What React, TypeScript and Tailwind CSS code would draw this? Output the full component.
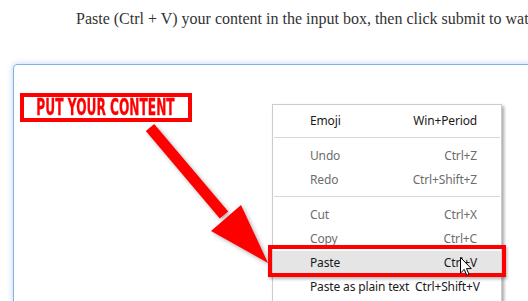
const menuFont = { fontFamily: '"Noto Sans", "Open Sans", sans-serif' };

type Item = { label: string; keys: string; disabled?: boolean; active?: boolean };

const groups: Item[][] = [
  [{ label: "Emoji", keys: "Win+Period" }],
  [
    { label: "Undo", keys: "Ctrl+Z", disabled: true },
    { label: "Redo", keys: "Ctrl+Shift+Z", disabled: true },
  ],
  [
    { label: "Cut", keys: "Ctrl+X", disabled: true },
    { label: "Copy", keys: "Ctrl+C", disabled: true },
    { label: "Paste", keys: "Ctrl+V", active: true },
    { label: "Paste as plain text", keys: "Ctrl+Shift+V" },
  ],
];

function MenuRow({ item }: { item: Item }) {
  return (
    <div
      className={`flex h-[24px] items-center justify-between gap-[6px] whitespace-nowrap pl-[37px] pr-[24px] text-[12px] leading-[16px] tracking-[-0.15px] ${
        item.active ? "bg-[#e5e5e5]" : ""
      } ${item.disabled ? "text-[#6d6d6d]" : "text-[#1a1a1a]"}`}
    >
      <span>{item.label}</span>
      <span>{item.keys}</span>
    </div>
  );
}

export default function App() {
  return (
    <div className="relative h-[301px] w-[528px] overflow-hidden bg-white">
      <p
        className="whitespace-nowrap pl-[76px] pt-[7px] text-[16px] leading-[24px] text-[#333]"
        style={{ fontFamily: '"Liberation Serif", "Times New Roman", serif' }}
      >
        Paste (Ctrl + V) your content in the input box, then click submit to watch the magic.
      </p>

      {/* input box */}
      <div className="ml-[13px] mt-[33px] h-[300px] w-[600px] rounded-[4px] border border-[#80b3e3] shadow-[0_0_6px_rgba(102,165,230,0.45)]">
        <div className="ml-[6px] mt-[28px] flex h-[29px] w-[172px] items-center justify-center overflow-hidden border-4 border-[#ff0000]">
          <span
            className="inline-block origin-center scale-x-[0.53] whitespace-nowrap text-[23px] font-black leading-none text-[#ff0000] [-webkit-text-stroke:0.35px_#ff0000]"
            style={{ fontFamily: '"DejaVu Sans", sans-serif' }}
          >
            PUT YOUR CONTENT
          </span>
        </div>
      </div>

      {/* big arrow */}
      <svg
        className="pointer-events-none absolute left-0 top-0 drop-shadow-[2px_2px_2px_rgba(0,0,0,0.3)]"
        width="528"
        height="301"
        viewBox="0 0 528 301"
      >
        <line x1="150" y1="127.5" x2="224" y2="215" stroke="#ff0000" strokeWidth="11" />
        <polygon points="211,231 241,205 268,263" fill="#ff0000" />
      </svg>

      {/* context menu */}
      <div
        className="absolute left-[272px] top-[104px] h-[220px] w-[230px] border border-[#cccccc] bg-white pt-[4px] shadow-[2px_2px_3px_rgba(0,0,0,0.35)]"
        style={menuFont}
      >
        {groups.map((group, gi) => (
          <div key={gi}>
            {gi > 0 && <div className="mx-[1px] mb-[6px] mt-[4px] h-px bg-[#d7d7d7]" />}
            {group.map((item) => (
              <MenuRow key={item.label} item={item} />
            ))}
          </div>
        ))}
      </div>

      {/* red highlight around Paste */}
      <div className="absolute left-[268px] top-[245px] h-[32px] w-[238px] border-4 border-[#ff0000] shadow-[1px_2px_3px_rgba(0,0,0,0.3)]" />

      {/* mouse pointer */}
      <svg className="absolute left-[460px] top-[257px]" width="13" height="20" viewBox="0 0 13 20">
        <path
          d="M0.5 0.5 L0.5 16 L4.2 12.4 L6.8 18.3 L9 17.3 L6.5 11.6 L11.3 11.6 Z"
          fill="#fff"
          stroke="#000"
          strokeWidth="1"
          strokeLinejoin="miter"
        />
      </svg>
    </div>
  );
}
